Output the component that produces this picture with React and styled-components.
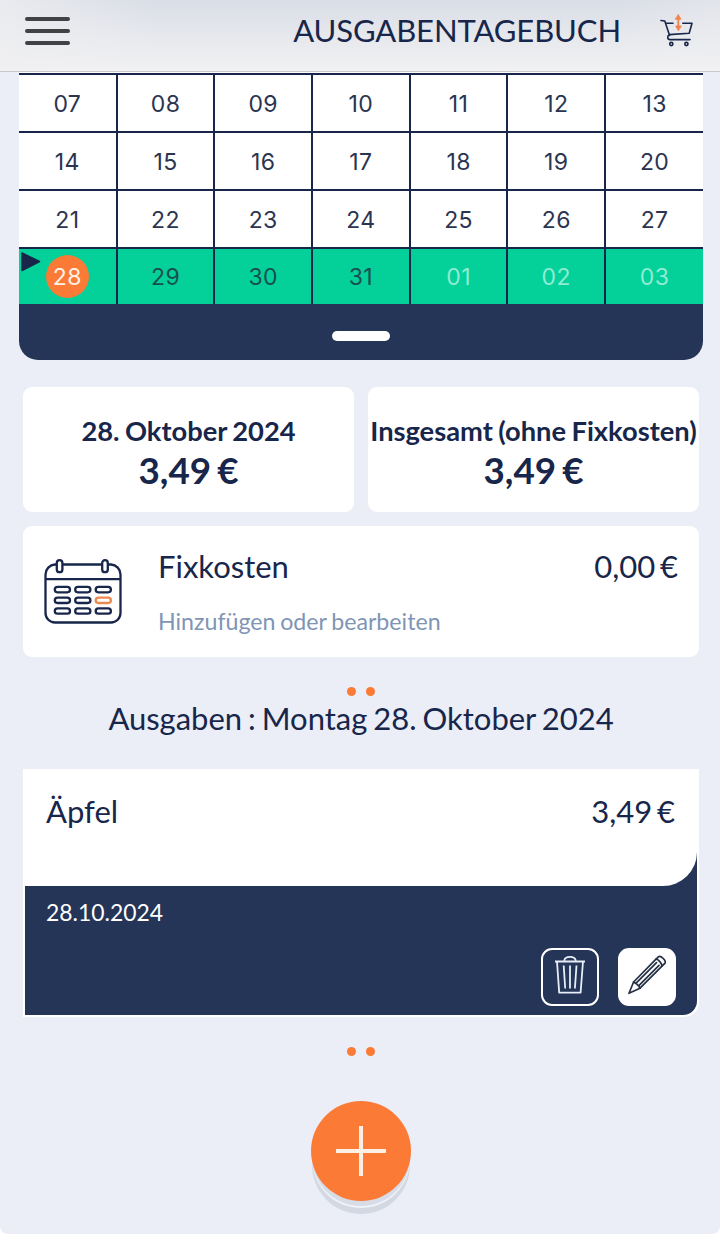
import React from 'react'
import styled, { ThemeProvider, createGlobalStyle } from 'styled-components'

const theme = {
    colors: {
        page: '#ebeef6',
        ink: '#17264a',
        navy: '#253557',
        green: '#04d09a',
        orange: '#fb7a36',
        muted: '#7f95b5',
        white: '#ffffff'
    }
}

const GlobalStyle = createGlobalStyle`
    * {
        box-sizing: border-box;
    }
    body {
        margin: 0;
        background-color: #fff;
        font-family: Lato, "Liberation Sans", sans-serif;
        color: ${ props => props.theme.colors.ink };
    }
`

const Page = styled.div`
    width: 720px;
    height: 1234px;
    overflow: hidden;
    display: flex;
    flex-direction: column;
    background-color: ${ props => props.theme.colors.page };
    border-radius: 0 0 8px 8px;
`

const Header = styled.header`
    flex: none;
    height: 72px;
    padding: 0 26px 10px 25px;
    display: flex;
    align-items: center;
    border-bottom: 1px solid #c6cacf;
    background:
        linear-gradient(90deg, rgba(240, 240, 242, .7), rgba(240, 240, 242, 0) 22%, rgba(240, 240, 242, 0) 85%, rgba(240, 240, 242, .4)),
        linear-gradient(#d9dde6, #e6e8ed 50%, #f1f1f2);
`

const MenuButton = styled.div`
    width: 45px;
    height: 28px;
    display: flex;
    flex-direction: column;
    justify-content: space-between;
`

const MenuBar = styled.span`
    height: 4px;
    border-radius: 2px;
    background-color: #414244;
`

const Title = styled.h1`
    margin: 0 39px 2px auto;
    font-size: 31px;
    font-weight: 400;
    line-height: 40px;
    letter-spacing: -.1px;
`

const Calendar = styled.section`
    flex: none;
    margin: 0 17px 0 19px;
    padding-top: 1px;
    border-radius: 0 0 19px 19px;
    overflow: hidden;
    background-color: ${ props => props.theme.colors.white };
`

const Week = styled.div`
    height: ${ props => props.$active ? 57 : 58 }px;
    display: grid;
    grid-template-columns: 98.7px repeat(5, 97.7px) 1fr;
    border-top: 2px solid ${ props => props.theme.colors.ink };
    background-color: ${ props => props.$active ? props.theme.colors.green : props.theme.colors.white };
`

const Day = styled.div`
    position: relative;
    display: flex;
    align-items: center;
    justify-content: center;
    padding-top: ${ props => props.$active ? 0 : 2 }px;
    border-right: 2px solid ${ props => props.theme.colors.ink };
    font-family: Inter, "Liberation Sans", sans-serif;
    font-size: 23px;
    letter-spacing: .4px;
    color: ${ props => props.$next ? '#8fecd3' : props.$active ? '#17504f' : '#2b3450' };

    &:last-child {
        border-right: 0;
    }
`

const Today = styled.span`
    width: 43px;
    height: 43px;
    border-radius: 50%;
    display: flex;
    align-items: center;
    justify-content: center;
    background-color: ${ props => props.theme.colors.orange };
    color: #fff3e6;
`

const Marker = styled.svg`
    position: absolute;
    left: 2px;
    top: 3px;
`

const CalendarFoot = styled.div`
    height: 56px;
    display: flex;
    justify-content: center;
    padding-top: 27px;
    background-color: ${ props => props.theme.colors.navy };
`

const Handle = styled.span`
    width: 58px;
    height: 10px;
    border-radius: 5px;
    background-color: ${ props => props.theme.colors.white };
`

const Content = styled.main`
    padding: 27px 21px 0 23px;
    display: flex;
    flex-direction: column;
`

const Totals = styled.div`
    display: grid;
    grid-template-columns: 1fr 1fr;
    gap: 14px;
`

const TotalCard = styled.div`
    height: 125px;
    padding-top: 26px;
    border-radius: 9px;
    display: flex;
    flex-direction: column;
    align-items: center;
    background-color: ${ props => props.theme.colors.white };
`

const TotalLabel = styled.div`
    font-size: 27.3px;
    font-weight: 700;
    line-height: 36px;
    word-spacing: -1.2px;
    white-space: nowrap;
`

const TotalAmount = styled.div`
    font-size: 36.8px;
    font-weight: 700;
    line-height: 42px;
    word-spacing: -2.8px;
`

const FixedCosts = styled.div`
    height: 131px;
    margin-top: 14px;
    padding: 0 21px;
    border-radius: 9px;
    display: flex;
    align-items: flex-start;
    background-color: ${ props => props.theme.colors.white };
`

const CalendarIcon = styled.svg`
    flex: none;
    margin-top: 32px;
`

const FixedText = styled.div`
    flex: 1;
    margin-left: 36px;
    padding-top: 20px;
`

const Line = styled.div`
    display: flex;
    justify-content: space-between;
    font-size: 31px;
    line-height: 40px;
    word-spacing: -3.2px;
`

const Hint = styled.div`
    margin-top: 18px;
    font-size: 23.2px;
    line-height: 34px;
    word-spacing: -1.3px;
    color: ${ props => props.theme.colors.muted };
`

const Dots = styled.div`
    display: flex;
    justify-content: center;
    gap: 10px;
    margin-top: 30px;
`

const Dot = styled.span`
    width: 9px;
    height: 9px;
    border-radius: 50%;
    background-color: ${ props => props.theme.colors.orange };
`

const ListTitle = styled.h2`
    margin: 2px 0 31px;
    font-size: 31px;
    font-weight: 400;
    line-height: 40px;
    word-spacing: -2px;
    text-align: center;
    white-space: nowrap;
`

const Expense = styled.article`
    height: 248px;
    padding: 0 2px 2px;
    border-radius: 0 0 15px 0;
    background-color: ${ props => props.theme.colors.white };
`

const ExpenseBody = styled.div`
    height: 246px;
    border-radius: 0 0 14px 0;
    overflow: hidden;
    background: linear-gradient(#fff 60px, ${ props => props.theme.colors.navy } 60px);
`

const ExpenseTop = styled.div`
    height: 117px;
    padding: 22px 22px 0 21px;
    border-radius: 0 0 34px 0;
    background-color: ${ props => props.theme.colors.white };
`

const ExpenseFoot = styled.div`
    padding: 9px 21px 0;
    color: ${ props => props.theme.colors.white };
`

const ExpenseDate = styled.div`
    font-size: 22.9px;
    line-height: 34px;
`

const Actions = styled.div`
    display: flex;
    justify-content: flex-end;
    gap: 19px;
    margin-top: 19px;
`

const ActionButton = styled.div`
    width: 58px;
    height: 58px;
    padding-bottom: 4px;
    border: 2px solid ${ props => props.theme.colors.white };
    border-radius: 11px;
    display: flex;
    align-items: center;
    justify-content: center;
    background-color: ${ props => props.$filled ? props.theme.colors.white : 'transparent' };
`

const AddButton = styled.div`
    width: 100px;
    height: 100px;
    margin: 45px auto 0;
    border-radius: 50%;
    display: flex;
    align-items: center;
    justify-content: center;
    background-color: ${ props => props.theme.colors.orange };
    box-shadow: 0 6px 0 -1px #d8dce6, 0 8px 0 -1px #eef2fa, 0 14px 0 -1px #d3d8e2;
`

const weeks = [
    ['07', '08', '09', '10', '11', '12', '13'],
    ['14', '15', '16', '17', '18', '19', '20'],
    ['21', '22', '23', '24', '25', '26', '27']
]

const currentWeek = ['28', '29', '30', '31', '01', '02', '03']

const CartIcon = () => (
    <svg width='34' height='34' viewBox='0 0 34 34' fill='none' stroke='#17264a' strokeWidth='1.6' strokeLinecap='round' strokeLinejoin='round'>
        <path d='M1 6.5 4.8 7 9.6 21.5M6.2 9.2H13M22.8 9.2H32L29.2 19.3 9.2 20.6C7 22 7.3 25.6 10 25.6H30' />
        <circle cx='11.3' cy='30' r='1.6' />
        <circle cx='26.4' cy='30' r='1.6' />
        <path d='M18.3 4V13' stroke='#f0824c' strokeWidth='1.9' />
        <path d='M18.3 .8 21 5.2H15.6ZM18.3 16.5 15.6 12H21Z' fill='#f0824c' stroke='#f0824c' strokeWidth='.8' />
    </svg>
)

const FixedCostsIcon = () => (
    <CalendarIcon width='78' height='68' viewBox='0 0 78 68' fill='none' stroke='#17264a' strokeWidth='2.3'>
        <path d='M12 6.5H11A10 10 0 0 0 1.5 16.5V55A9.5 9.5 0 0 0 11 64.5H67A9.5 9.5 0 0 0 76.5 55V16.5A10 10 0 0 0 67 6.5H64M19 6.5H57.5M1.5 21.2H76.5' />
        <rect x='12.8' y='2.2' width='5.6' height='12' rx='2.8' />
        <rect x='58.2' y='2.2' width='5.6' height='12' rx='2.8' />
        {[28.9, 39.6, 50.3].map((y, row) => [10.8, 31.2, 51.7].map((x, col) => (
            <rect
                key={x}
                x={x}
                y={y}
                width='15.2'
                height='5.4'
                rx='2.7'
                stroke={row === 1 && col === 2 ? '#ea8a50' : '#17264a'}
            />
        )))}
    </CalendarIcon>
)

const TrashIcon = () => (
    <svg width='32' height='40' viewBox='0 0 32 40' fill='none' stroke='#e8eef8' strokeWidth='1.8' strokeLinejoin='round'>
        <path d='M1 6.5H31M3 6.5 5.2 37.6H26.6L29 6.5' />
        <path d='M10.2 5.8C11 .6 21 .6 21.8 5.8' />
        <path d='M9.7 10.5 11.2 33.5M16 10.5V33.5M22.5 10.5 20.9 33.5' />
    </svg>
)

const PencilIcon = () => (
    <svg width='38' height='40' viewBox='0 0 38 40' fill='none' stroke='#253045' strokeWidth='1.7' strokeLinejoin='round' strokeLinecap='round'>
        <path d='M1 38.3 5.6 27 28 4.2 30.4 1.8C32.6-.2 39 6.2 36.8 8.4L34 11.2 12 33.2Z' />
        <path d='M5.6 27 7.9 28.4 10.6 30.8 12 33.2M28 4.2C30 4 34.2 8.5 34 11.2M7.9 28.4 28.5 7.7M10.6 30.8 31 10.4' />
    </svg>
)

const App = () => (
    <ThemeProvider theme={theme}>
        <GlobalStyle />
        <Page>
            <Header>
                <MenuButton>
                    <MenuBar />
                    <MenuBar />
                    <MenuBar />
                </MenuButton>
                <Title>AUSGABENTAGEBUCH</Title>
                <CartIcon />
            </Header>

            <Calendar>
                {weeks.map(week => (
                    <Week key={week[0]}>
                        {week.map(day => <Day key={day}>{day}</Day>)}
                    </Week>
                ))}
                <Week $active>
                    {currentWeek.map((day, i) => (
                        <Day key={day} $active $next={i > 3}>
                            {i === 0
                                ? <>
                                    <Marker width='20' height='20' viewBox='0 0 20 20'>
                                        <path d='M1 1 18.5 9.5 1 18.5Z' fill='#17264a' stroke='#17264a' strokeWidth='1.5' strokeLinejoin='round' />
                                    </Marker>
                                    <Today>{day}</Today>
                                </>
                                : day}
                        </Day>
                    ))}
                </Week>
                <CalendarFoot>
                    <Handle />
                </CalendarFoot>
            </Calendar>

            <Content>
                <Totals>
                    <TotalCard>
                        <TotalLabel>28. Oktober 2024</TotalLabel>
                        <TotalAmount>3,49 €</TotalAmount>
                    </TotalCard>
                    <TotalCard>
                        <TotalLabel>Insgesamt (ohne Fixkosten)</TotalLabel>
                        <TotalAmount>3,49 €</TotalAmount>
                    </TotalCard>
                </Totals>

                <FixedCosts>
                    <FixedCostsIcon />
                    <FixedText>
                        <Line>
                            <span>Fixkosten</span>
                            <span>0,00 €</span>
                        </Line>
                        <Hint>Hinzufügen oder bearbeiten</Hint>
                    </FixedText>
                </FixedCosts>

                <Dots>
                    <Dot />
                    <Dot />
                </Dots>
                <ListTitle>Ausgaben : Montag 28. Oktober 2024</ListTitle>

                <Expense>
                    <ExpenseBody>
                        <ExpenseTop>
                            <Line>
                                <span>Äpfel</span>
                                <span>3,49 €</span>
                            </Line>
                        </ExpenseTop>
                        <ExpenseFoot>
                            <ExpenseDate>28.10.2024</ExpenseDate>
                            <Actions>
                                <ActionButton><TrashIcon /></ActionButton>
                                <ActionButton $filled><PencilIcon /></ActionButton>
                            </Actions>
                        </ExpenseFoot>
                    </ExpenseBody>
                </Expense>

                <Dots>
                    <Dot />
                    <Dot />
                </Dots>
                <AddButton>
                    <svg width='50' height='50' viewBox='0 0 50 50' stroke='#fff0e6' strokeWidth='4'>
                        <path d='M25 0V50M0 25H50' />
                    </svg>
                </AddButton>
            </Content>
        </Page>
    </ThemeProvider>
)

export default App
